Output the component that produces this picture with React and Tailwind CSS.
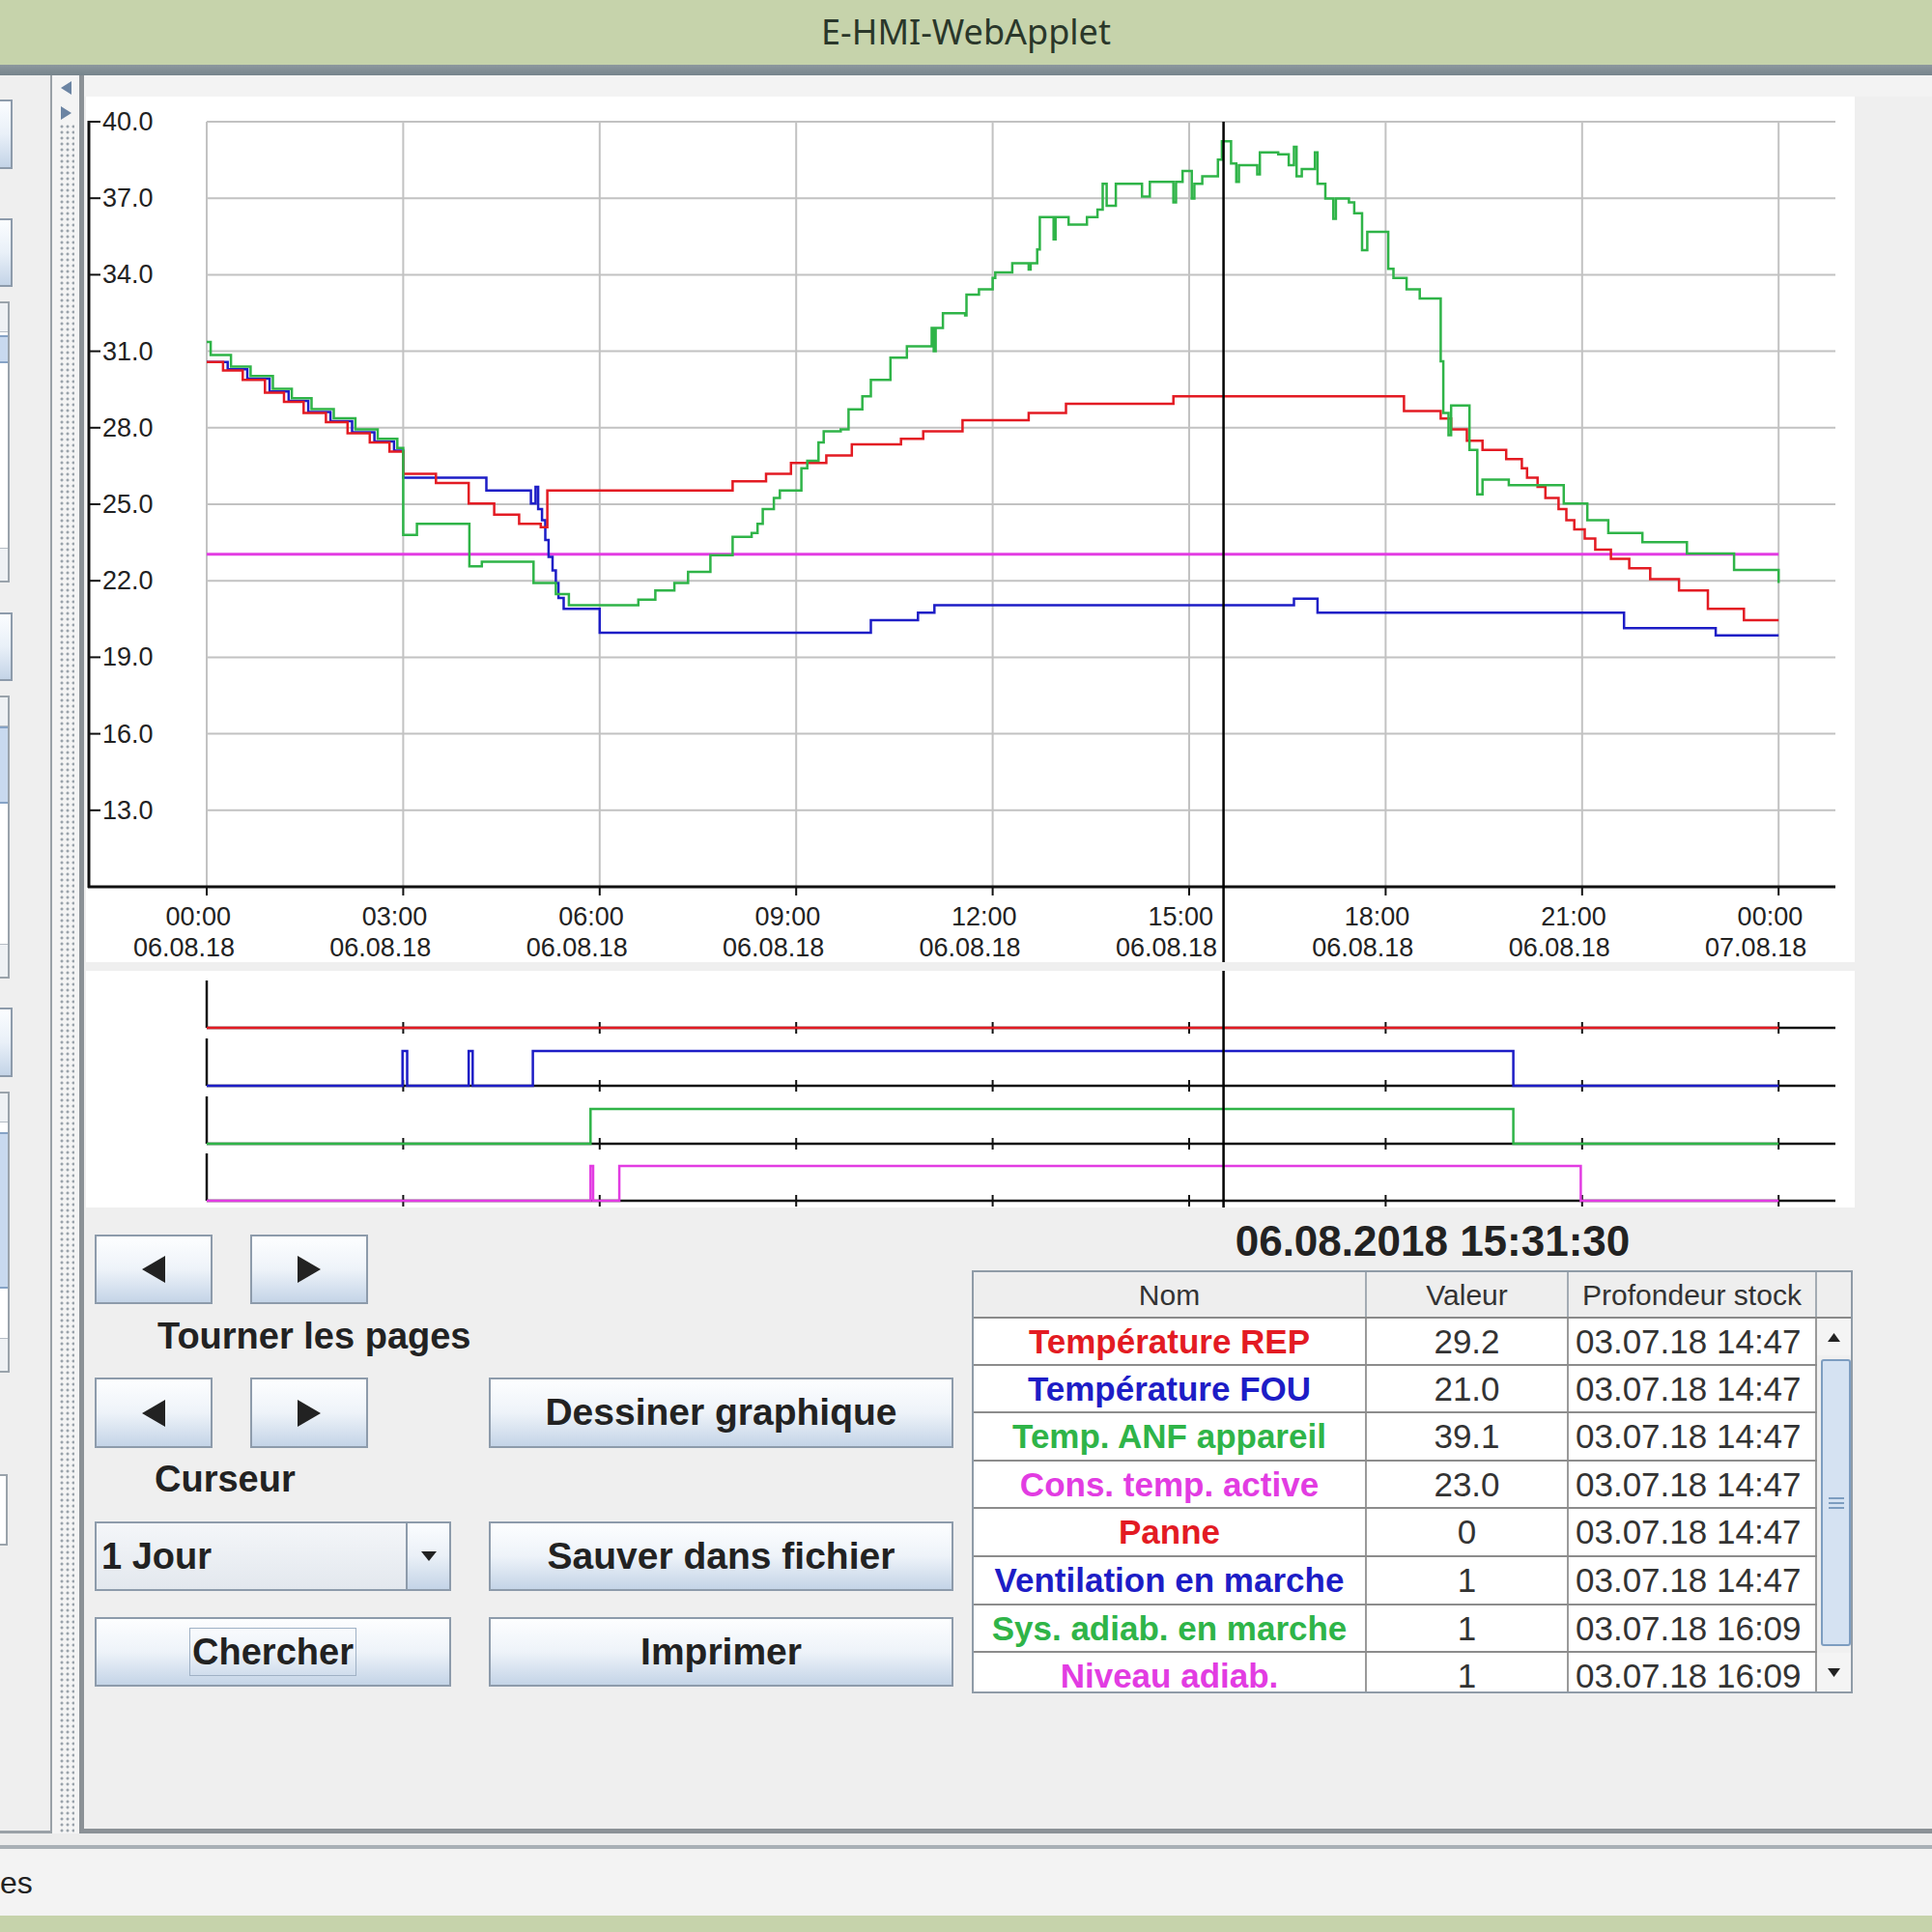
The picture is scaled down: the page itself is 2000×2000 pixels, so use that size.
import React from 'react';

// chart geometry, in page pixels
const X = (h) => 214 + h * 67.8;
const Y = (v) => 126 + (40 - v) * 26.4;
const CURSOR = X(15.525);

const RED = '#e31b23';
const BLUE = '#1d1dc6';
const GREEN = '#2fb448';
const MAGENTA = '#e23ce2';

const stepPath = (pts, end = 24) => {
  let d = `M${X(pts[0][0]).toFixed(1)} ${Y(pts[0][1]).toFixed(1)}`;
  for (let i = 1; i < pts.length; i++) {
    d += ` H${X(pts[i][0]).toFixed(1)} V${Y(pts[i][1]).toFixed(1)}`;
  }
  return d + ` H${X(end).toFixed(1)}`;
};

const early = [
  [0.25, 30.25], [0.55, 29.88], [0.89, 29.38], [1.18, 29.01], [1.48, 28.58],
  [1.82, 28.22], [2.15, 27.78], [2.49, 27.42], [2.79, 27.06],
];

const redSeries = [
  [0, 30.58], ...early,
  [3.0, 26.19], [3.5, 25.83], [4.0, 25.03], [4.39, 24.59], [4.77, 24.23], [5.1, 24.1], [5.2, 25.54],
  [8.03, 25.9], [8.54, 26.19], [8.92, 26.62], [9.46, 26.91], [9.85, 27.35], [10.6, 27.57],
  [10.94, 27.86], [11.54, 28.29], [12.55, 28.58], [13.12, 28.94], [14.76, 29.23], [18.28, 28.65],
  [18.84, 28.36], [19.0, 27.93], [19.24, 27.49], [19.48, 27.13], [19.84, 26.77], [20.08, 26.41],
  [20.16, 26.04], [20.32, 25.68], [20.44, 25.25], [20.64, 24.81], [20.76, 24.38], [20.88, 24.01],
  [21.04, 23.65], [21.2, 23.22], [21.44, 22.86], [21.72, 22.49], [22.04, 22.06], [22.48, 21.62],
  [22.92, 20.9], [23.47, 20.46],
];

const blueSeries = [
  [0, 30.58], ...early.map(([h, v]) => [h + 0.07, v + 0.04]),
  [3.0, 26.04], [4.27, 25.54], [4.95, 25.03], [5.02, 25.68], [5.06, 24.81], [5.12, 24.38],
  [5.17, 23.6], [5.22, 22.93], [5.28, 22.4], [5.33, 21.91], [5.37, 21.33], [5.45, 20.9],
  [6.0, 19.96], [10.14, 20.46], [10.86, 20.75], [11.11, 21.04], [16.6, 21.3], [16.96, 20.75],
  [21.64, 20.14], [23.04, 19.86],
];

const greenSeries = [
  [0, 31.36], [0.06, 30.85], ...early.map(([h, v]) => [h + 0.12, v + 0.15]),
  [3.0, 23.8], [3.21, 24.23], [4.01, 22.57], [4.2, 22.75], [4.99, 21.91], [5.33, 21.48],
  [5.53, 21.04], [6.59, 21.26], [6.85, 21.62], [7.14, 21.91], [7.35, 22.35], [7.69, 23.0],
  [8.03, 23.72], [8.32, 23.87], [8.41, 24.23], [8.49, 24.81], [8.66, 25.25], [8.75, 25.54],
  [9.08, 26.41], [9.17, 26.7], [9.34, 27.42], [9.42, 27.86], [9.68, 27.93], [9.8, 28.72],
  [10.01, 29.23], [10.14, 29.88], [10.44, 30.75], [10.69, 31.19], [11.07, 31.91], [11.1, 31.0],
  [11.13, 31.91], [11.24, 32.49], [11.58, 32.4], [11.6, 33.22], [11.79, 33.43], [12.0, 33.87],
  [12.04, 34.09], [12.3, 34.45], [12.55, 34.2], [12.58, 34.45], [12.68, 34.99], [12.72, 36.26],
  [12.93, 35.39], [12.96, 36.26], [13.16, 35.97], [13.44, 36.26], [13.6, 36.55], [13.68, 37.57],
  [13.74, 36.7], [13.88, 37.57], [14.28, 37.06], [14.4, 37.64], [14.76, 36.84], [14.8, 37.64],
  [14.9, 38.07], [15.04, 36.99], [15.08, 37.57], [15.2, 37.86], [15.44, 38.51], [15.5, 39.23],
  [15.64, 38.36], [15.72, 37.64], [15.76, 38.29], [16.04, 37.93], [16.08, 38.8], [16.36, 38.72],
  [16.52, 38.29], [16.6, 39.01], [16.64, 37.86], [16.72, 38.14], [16.92, 38.8], [16.96, 37.57],
  [17.08, 36.99], [17.2, 36.19], [17.24, 36.99], [17.44, 36.84], [17.52, 36.41], [17.64, 34.96],
  [17.72, 35.68], [18.04, 34.23], [18.12, 33.87], [18.32, 33.43], [18.52, 33.07], [18.84, 30.61],
  [18.88, 28.58], [18.96, 27.71], [19.0, 28.87], [19.28, 27.13], [19.4, 25.39], [19.48, 25.97],
  [19.88, 25.75], [20.72, 25.03], [21.08, 24.38], [21.4, 23.87], [21.92, 23.51], [22.6, 23.07],
  [23.32, 22.42], [24.0, 21.91],
];

const hours = [0, 3, 6, 9, 12, 15, 18, 21, 24];
const levels = [40, 37, 34, 31, 28, 25, 22, 19, 16, 13];

const digitalRows = [
  { base: 1064, color: RED, pts: [[0, 0]] },
  { base: 1124, color: BLUE, pts: [[0, 0], [2.99, 1], [3.06, 0], [4.0, 1], [4.06, 0], [4.98, 1], [19.95, 0]] },
  { base: 1184, color: GREEN, pts: [[0, 0], [5.86, 1], [19.95, 0]] },
  { base: 1243, color: MAGENTA, pts: [[0, 0], [5.86, 1], [5.9, 0], [6.3, 1], [20.98, 0]] },
];

const digitalPath = (base, pts) => {
  const lv = (l) => (base - l * 36).toFixed(1);
  let d = `M${X(pts[0][0]).toFixed(1)} ${lv(pts[0][1])}`;
  for (let i = 1; i < pts.length; i++) d += ` H${X(pts[i][0]).toFixed(1)} V${lv(pts[i][1])}`;
  return d + ` H${X(24).toFixed(1)}`;
};

const rows = [
  { name: 'Température REP', color: 'text-[#e31b23]', value: '29.2', date: '03.07.18 14:47', h: 'h-[49px]' },
  { name: 'Température FOU', color: 'text-[#1d1dc6]', value: '21.0', date: '03.07.18 14:47', h: 'h-[49px]' },
  { name: 'Temp. ANF appareil', color: 'text-[#2fb448]', value: '39.1', date: '03.07.18 14:47', h: 'h-[50px]' },
  { name: 'Cons. temp. active', color: 'text-[#e23ce2]', value: '23.0', date: '03.07.18 14:47', h: 'h-[49px]' },
  { name: 'Panne', color: 'text-[#e31b23]', value: '0', date: '03.07.18 14:47', h: 'h-[50px]' },
  { name: 'Ventilation en marche', color: 'text-[#1d1dc6]', value: '1', date: '03.07.18 14:47', h: 'h-[50px]' },
  { name: 'Sys. adiab. en marche', color: 'text-[#2fb448]', value: '1', date: '03.07.18 16:09', h: 'h-[49px]' },
  { name: 'Niveau adiab.', color: 'text-[#e23ce2]', value: '1', date: '03.07.18 16:09', h: 'h-[49px]' },
];

const btn = 'border-2 border-[#8d9bab] bg-linear-to-b from-[#fdfeff] via-[#eef3f9] to-[#c4d4e7] flex items-center justify-center';

const Tri = ({ dir = 'left', w = 24, h = 28 }) => {
  const pts = {
    left: `${w},0 ${w},${h} 0,${h / 2}`,
    right: `0,0 0,${h} ${w},${h / 2}`,
    up: `0,${h} ${w},${h} ${w / 2},0`,
    down: `0,0 ${w},0 ${w / 2},${h}`,
  }[dir];
  return (
    <svg width={w} height={h} viewBox={`0 0 ${w} ${h}`}>
      <polygon points={pts} fill="#222" />
    </svg>
  );
};

const SideButton = ({ className }) => (
  <div className={`w-[13px] border-2 border-l-0 border-[#8d9bab] bg-linear-to-b from-[#fbfdff] via-[#e9f0f8] to-[#c4d4e7] ${className}`} />
);

const SideList = ({ className, thumbTop, thumbH }) => (
  <div className={`w-[10px] border-2 border-l-0 border-[#9aa3ab] bg-white flex flex-col ${className}`}>
    <div className="h-[30px] bg-[#eef1f4] border-b border-[#b5bcc4]" />
    <div style={{ marginTop: thumbTop, height: thumbH }} className="bg-[#c8d9ef] border-y-2 border-[#86a3c6]" />
    <div className="flex-1" />
    <div className="h-[34px] bg-[#eef1f4] border-t border-[#b5bcc4]" />
  </div>
);

const Chart = () => (
  <svg width="1831" height="896" viewBox="89 100 1831 896" className="block">
    {hours.map((h) => (
      <line key={`g${h}`} x1={X(h)} x2={X(h)} y1={126} y2={918} stroke="#c2c2c2" strokeWidth="2" />
    ))}
    {levels.map((v) => (
      <line key={`l${v}`} x1={214} x2={1900} y1={Y(v)} y2={Y(v)} stroke="#c2c2c2" strokeWidth="2" />
    ))}
    <path d={stepPath([[0, 23.04]])} stroke={MAGENTA} strokeWidth="3" fill="none" />
    <path d={stepPath(blueSeries)} stroke={BLUE} strokeWidth="2.5" fill="none" />
    <path d={stepPath(redSeries)} stroke={RED} strokeWidth="2.5" fill="none" />
    <path d={stepPath(greenSeries)} stroke={GREEN} strokeWidth="2.5" fill="none" />
    <line x1={92} x2={92} y1={125} y2={919} stroke="#111" strokeWidth="3" />
    <line x1={91} x2={1900} y1={918} y2={918} stroke="#111" strokeWidth="3" />
    {levels.map((v) => (
      <g key={`t${v}`}>
        <line x1={92} x2={104} y1={Y(v)} y2={Y(v)} stroke="#111" strokeWidth="2" />
        <text x={106} y={Y(v) + 9} fontSize="27" fill="#222" fontFamily="'Liberation Sans', Arial, sans-serif">
          {v.toFixed(1)}
        </text>
      </g>
    ))}
    {hours.map((h) => (
      <g key={`x${h}`} fontSize="27" fill="#222" fontFamily="'Liberation Sans', Arial, sans-serif" textAnchor="end">
        <line x1={X(h)} x2={X(h)} y1={918} y2={927} stroke="#111" strokeWidth="2" />
        <text x={X(h) + 25} y={958}>{`${String(h % 24).padStart(2, '0')}:00`}</text>
        <text x={X(h) + 29} y={990}>{h === 24 ? '07.08.18' : '06.08.18'}</text>
      </g>
    ))}
    <line x1={CURSOR} x2={CURSOR} y1={126} y2={996} stroke="#000" strokeWidth="2.5" />
  </svg>
);

const Digital = () => (
  <svg width="1831" height="245" viewBox="89 1005 1831 245" className="block">
    {digitalRows.map((r, i) => (
      <g key={i}>
        <line x1={214} x2={1900} y1={r.base} y2={r.base} stroke="#111" strokeWidth="2.5" />
        <line x1={214} x2={214} y1={r.base - 49} y2={r.base} stroke="#111" strokeWidth="2.5" />
        {hours.slice(1).map((h) => (
          <line key={h} x1={X(h)} x2={X(h)} y1={r.base - 6} y2={r.base + 6} stroke="#111" strokeWidth="2" />
        ))}
        <path d={digitalPath(r.base, r.pts)} stroke={r.color} strokeWidth="2.5" fill="none" />
      </g>
    ))}
    <line x1={CURSOR} x2={CURSOR} y1={1005} y2={1250} stroke="#000" strokeWidth="2.5" />
  </svg>
);

const App = () => {
  return (
    <div className="w-[2000px] h-[2000px] flex flex-col overflow-hidden bg-[#efefef] font-['Liberation_Sans',Arial,sans-serif] text-[#222]">
      {/* window title */}
      <div className="h-[67px] bg-[#c6d3ab] flex items-center justify-center pb-[2px]">
        <span className="font-['Noto_Sans',sans-serif] text-[36px] text-[#2a372a]">E-HMI-WebApplet</span>
      </div>
      <div className="h-[11px] bg-linear-to-b from-[#8d989e] to-[#76848c]" />

      <div className="h-[1820px] flex">
        {/* left panel, mostly scrolled out of view */}
        <div className="w-[54px] border-r-2 border-b-[3px] border-[#9aa1a7] bg-[#efefef] flex flex-col overflow-hidden">
          <SideButton className="mt-[25px] h-[72px]" />
          <SideButton className="mt-[51px] h-[71px]" />
          <SideList className="mt-[15px] h-[291px]" thumbTop={3} thumbH={29} />
          <SideButton className="mt-[31px] h-[71px]" />
          <SideList className="mt-[15px] h-[293px]" thumbTop={0} thumbH={80} />
          <SideButton className="mt-[30px] h-[72px]" />
          <SideList className="mt-[15px] h-[291px]" thumbTop={10} thumbH={162} />
          <div className="mt-[105px] h-[74px] w-[8px] border-2 border-l-0 border-[#9aa3ab] bg-white" />
        </div>

        {/* splitter */}
        <div className="w-[28px] bg-[#f4f4f4] flex flex-col items-center">
          <div className="h-[50px] flex flex-col items-center pt-[6px] gap-[12px]">
            <svg width="11" height="14" viewBox="0 0 11 14"><polygon points="11,0 11,14 0,7" fill="#6b84a3" /></svg>
            <svg width="11" height="14" viewBox="0 0 11 14"><polygon points="0,0 0,14 11,7" fill="#6b84a3" /></svg>
          </div>
          <div className="flex-1 w-[16px] ml-[2px] bg-[radial-gradient(circle,#9aa3ab_1.2px,transparent_1.8px)] bg-[length:6px_6px]" />
        </div>
        <div className="w-[5px] bg-[#8b9196]" />

        {/* main area */}
        <div className="flex-1 flex flex-col border-b-[5px] border-[#8b9196] bg-[#efefef]">
          <div className="h-[22px] bg-[#f3f3f3]" />
          <div className="ml-[2px] w-[1831px] h-[896px] bg-white">
            <Chart />
          </div>
          <div className="ml-[2px] mt-[9px] w-[1831px] h-[245px] bg-white">
            <Digital />
          </div>

          <div className="flex-1 flex">
            {/* navigation */}
            <div className="ml-[11px] w-[369px] flex flex-col pt-[28px]">
              <div className="flex gap-[39px] h-[72px]">
                <div className={`${btn} w-[122px] h-[72px]`}><Tri dir="left" /></div>
                <div className={`${btn} w-[122px] h-[72px]`}><Tri dir="right" /></div>
              </div>
              <div className="h-[76px] flex items-center pl-[65px] pb-[10px] text-[38px] font-bold whitespace-nowrap">Tourner les pages</div>
              <div className="flex gap-[39px] h-[73px]">
                <div className={`${btn} w-[122px] h-[73px]`}><Tri dir="left" /></div>
                <div className={`${btn} w-[122px] h-[73px]`}><Tri dir="right" /></div>
              </div>
              <div className="h-[76px] flex items-center pl-[62px] pb-[12px] text-[38px] font-bold whitespace-nowrap">Curseur</div>
              <div className="h-[72px] flex border-2 border-[#8d9bab] bg-linear-to-b from-[#f4f6f9] to-[#e3e8ee]">
                <div className="flex-1 flex items-center pl-[5px] text-[38px] font-bold">1 Jour</div>
                <div className="w-[45px] border-l-2 border-[#8d9bab] bg-linear-to-b from-[#fbfdff] via-[#eaf0f7] to-[#c4d4e7] flex items-center justify-center">
                  <Tri dir="down" w={16} h={10} />
                </div>
              </div>
              <div className={`${btn} mt-[27px] h-[72px]`}>
                <span className="border border-[#9fb1c5] px-[2px] leading-[48px] text-[38px] font-bold">Chercher</span>
              </div>
            </div>

            {/* actions */}
            <div className="ml-[39px] w-[481px] flex flex-col pt-[176px]">
              <div className={`${btn} h-[73px] text-[39px] font-bold whitespace-nowrap`}>Dessiner graphique</div>
              <div className={`${btn} mt-[76px] h-[72px] text-[39px] font-bold whitespace-nowrap`}>Sauver dans fichier</div>
              <div className={`${btn} mt-[27px] h-[72px] text-[39px] font-bold`}>Imprimer</div>
            </div>

            {/* values at cursor */}
            <div className="ml-[19px] w-[912px] flex flex-col">
              <div className="h-[65px] flex items-center justify-center pt-[5px] pl-[42px] text-[44px] font-bold">06.08.2018 15:31:30</div>
              <div className="h-[438px] border-2 border-[#8f9ba7] bg-[#eeeeee] flex flex-col">
                <div className="h-[48px] flex border-b-2 border-[#8a8a8a] text-[30px] text-[#333]">
                  <div className="w-[407px] border-r-2 border-[#a3abb3] flex items-center justify-center">Nom</div>
                  <div className="w-[209px] border-r-2 border-[#a3abb3] flex items-center justify-center">Valeur</div>
                  <div className="w-[257px] border-r-2 border-[#a3abb3] flex items-center justify-center whitespace-nowrap">Profondeur stock</div>
                  <div className="flex-1" />
                </div>
                <div className="flex-1 flex overflow-hidden">
                  <div className="w-[873px] flex flex-col overflow-hidden bg-white">
                    {rows.map((r) => (
                      <div key={r.name} className={`${r.h} shrink-0 flex border-b-2 border-[#8c8c8c] text-[35px] leading-[40px]`}>
                        <div className={`w-[407px] border-r-2 border-[#9a9a9a] flex items-center justify-center font-bold whitespace-nowrap ${r.color}`}>{r.name}</div>
                        <div className="w-[209px] border-r-2 border-[#9a9a9a] flex items-center justify-center text-[#333]">{r.value}</div>
                        <div className="w-[257px] border-r-2 border-[#9a9a9a] flex items-center pl-[7px] text-[#333] whitespace-nowrap">{r.date}</div>
                      </div>
                    ))}
                  </div>
                  {/* scrollbar */}
                  <div className="flex-1 flex flex-col bg-[#f0f0f0]">
                    <div className="h-[38px] shrink-0 flex items-center justify-center bg-[#f4f4f4]"><Tri dir="up" w={13} h={9} /></div>
                    <div className="mt-[4px] ml-[4px] h-[297px] shrink-0 bg-[#d5e2f2] border-2 border-[#7d9dc0] rounded-[3px] flex flex-col items-center justify-center gap-[3px]">
                      <div className="w-[16px] h-[2px] bg-[#7d9dc0]" />
                      <div className="w-[16px] h-[2px] bg-[#7d9dc0]" />
                      <div className="w-[16px] h-[2px] bg-[#7d9dc0]" />
                    </div>
                    <div className="mt-[7px] h-[40px] shrink-0 flex items-center justify-center bg-[#f4f4f4]"><Tri dir="down" w={13} h={9} /></div>
                  </div>
                </div>
              </div>
            </div>
          </div>
        </div>
      </div>

      {/* status bar */}
      <div className="h-[12px] bg-[#ececec]" />
      <div className="h-[4px] bg-[#a9b0b6]" />
      <div className="h-[69px] bg-[#f3f3f3] flex items-center text-[32px]">es</div>
      <div className="h-[17px] bg-[#c6d3ab]" />
    </div>
  );
};

export default App;
